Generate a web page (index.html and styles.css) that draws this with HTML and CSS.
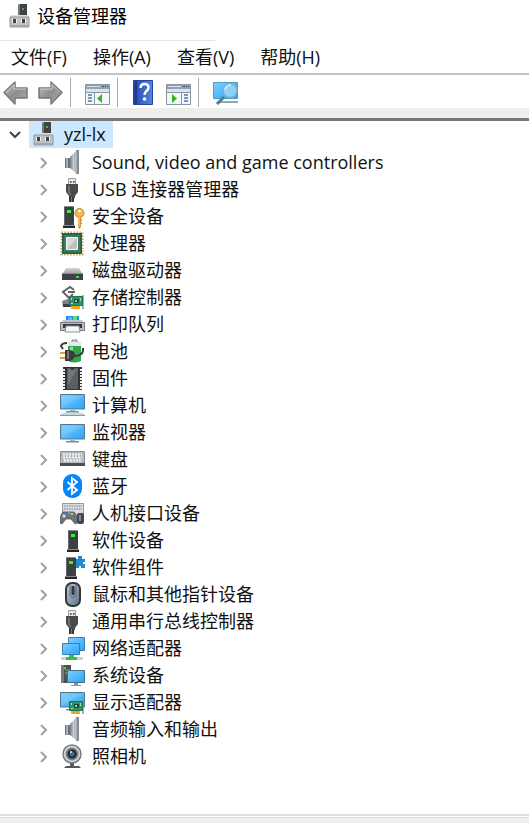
FILE: index.html
```html
<!DOCTYPE html>
<html lang="zh-CN">
<head>
<meta charset="utf-8">
<meta name="viewport" content="width=device-width, initial-scale=1">
<title>设备管理器</title>
<link rel="stylesheet" href="styles.css">
</head>
<body>
<svg class="defs" aria-hidden="true">
  <defs>
    <linearGradient id="screen" x1="0" y1="0" x2="1" y2="1"><stop offset="0" stop-color="#7cd0ff"/><stop offset="1" stop-color="#2aa4f8"/></linearGradient>
    <linearGradient id="metal" x1="0" y1="0" x2="0" y2="1"><stop offset="0" stop-color="#d4d6d8"/><stop offset="1" stop-color="#909498"/></linearGradient>
    <linearGradient id="cone" x1="0" y1="0" x2="1" y2="0"><stop offset="0" stop-color="#747b82"/><stop offset=".5" stop-color="#c6ccd1"/><stop offset="1" stop-color="#8b929a"/></linearGradient>
    <linearGradient id="arrow" x1="0" y1="0" x2="1" y2="1"><stop offset="0" stop-color="#c4c4c4"/><stop offset=".5" stop-color="#8e8e8e"/><stop offset="1" stop-color="#b0b0b0"/></linearGradient>
    <linearGradient id="book" x1="0" y1="0" x2="1" y2="0"><stop offset="0" stop-color="#24409c"/><stop offset=".25" stop-color="#3159bd"/><stop offset="1" stop-color="#5584da"/></linearGradient>
    <linearGradient id="mouse" x1="0" y1="0" x2="1" y2="1"><stop offset="0" stop-color="#c3cfdc"/><stop offset="1" stop-color="#5d7187"/></linearGradient>
    <symbol id="expand" viewBox="0 0 9 14"><path d="M2 2l5 5-5 5" fill="none" stroke="#a0a0a0" stroke-width="2"/></symbol>
    <symbol id="manager" viewBox="0 0 21 25">
      <path d="M9 1l2-1h7v13H9z" fill="#414244"/><path d="M9 1l2-1v13H9z" fill="#77797b"/><circle cx="14" cy="5" r="1" fill="#35df45"/>
      <path d="M2 11h17l1 3H1z" fill="#dedfe0"/><path d="M1 13h19v10H1z" fill="#c0c1c3" stroke="#98999c"/><path d="M1 21h19v2H1z" fill="#a6a7aa"/>
      <path d="M3 15h5v4H3zm9 0h5v4h-5z" fill="#f2f2f2"/><path d="M4 15h3v4H4zm9 0h3v4h-3z" fill="#414244"/>
    </symbol>
    <symbol id="speaker" viewBox="0 0 25 25">
      <path d="M5 8h5v10H5z" fill="#68747f"/><path d="M6 8h2v10H6z" fill="#a4b0b9"/><path d="M10 7l7-7v24l-7-6z" fill="url(#cone)"/><path d="M16 0h3v24h-3z" fill="#868e96"/><path d="M16 1v22" fill="none" stroke="#ccd2d8"/>
    </symbol>
    <symbol id="usb" viewBox="0 0 25 25">
      <path d="M8.500 1.500h7V8h-7z" fill="#ededed" stroke="#9a9a9a"/><path d="M10 4h1.500v2H10zm3 0h1.500v2H13z" fill="#555"/>
      <path d="M6 7h12v8l-3 4v2H9v-2l-3-4z" fill="#484b4d"/><path d="M8 9h2v6l1 3H9l-1-3z" fill="#6d7072"/><path d="M9 20h5v5H9z" fill="#393b3c"/><path d="M11 20h1v5h-1z" fill="#777"/>
    </symbol>
    <symbol id="box" viewBox="0 0 12 23">
      <path d="M1 0h9l1 1v19H1z" fill="#3d4042"/><path d="M1 0h9l1 1H1z" fill="#8a8c8e"/><path d="M1 1h1v18H1z" fill="#656769"/><path d="M0 20h12v2H0z" fill="#25282a"/><path d="M0 19h12v1H0z" fill="#898b8d"/><path d="M4 4h4v3H4z" fill="#30f52e"/>
    </symbol>
    <symbol id="monitor" viewBox="0 0 25 19">
      <path d="M.5.500h24v14.500H.5z" fill="url(#screen)" stroke="#55788e"/><path d="M2 2h21L2 13z" fill="#92d8ff" opacity=".35"/><path d="M10 15h5v2h-5z" fill="#a8bac7"/><path d="M6 17h13v1.500H6z" fill="#71909f"/>
    </symbol>
    <symbol id="card" viewBox="0 0 15 14">
      <path d="M14 0v14" stroke="#879199" stroke-width="1.500"/><path d="M.5 1.500h13v9H.5z" fill="#2d9465" stroke="#207650"/><path d="M5 4h5v4H5z" fill="#1b4e3d"/><path d="M6 5h2v2H6z" fill="#8bcaac"/><path d="M2 3h1v2H2zm9 0h1v3h-1zM2 8h2v1H2z" fill="#a4e3c4"/><path d="M2 11h9v3H2z" fill="#f8ac20"/><path d="M5 11v3m3-3v3" stroke="#d98610" stroke-width=".6"/>
    </symbol>
    <symbol id="console" viewBox="0 0 25 22">
      <path d="M.5.500h24v20H.5z" fill="#f5f6f7" stroke="#8995a0"/><path d="M1 1h23v4H1z" fill="#93a2b0"/><path d="M2 2h13v1H2z" fill="#d8e1e9"/><path d="M17 2h2v1h-2zm3 0h1v1h-1zm2 0h1v1h-1z" fill="#35516b"/><path d="M1 5h23v3H1z" fill="#dfe3e6"/><path d="M1 8h23v1H1z" fill="#8995a0"/>
    </symbol>
  </defs>
</svg>

<div class="window">
  <header class="titlebar">
    <svg class="manager-icon" aria-hidden="true"><use href="#manager"/></svg>
    <h1 class="title">设备管理器</h1>
  </header>

  <nav class="menubar">
    <button class="menu" type="button">文件(F)</button>
    <button class="menu" type="button">操作(A)</button>
    <button class="menu" type="button">查看(V)</button>
    <button class="menu" type="button">帮助(H)</button>
  </nav>

  <div class="toolbar" role="toolbar" aria-label="工具栏">
    <div class="group">
      <button class="tool" type="button" aria-label="后退"><svg width="25" height="25" viewBox="0 0 25 25"><path d="M1 12.500L12 2v6h12v10H12v6z" fill="url(#arrow)" stroke="#777" stroke-width="1.500" stroke-linejoin="round"/><path d="M3 12.500l8-8V9h12" fill="none" stroke="#cfcfcf"/></svg></button>
      <button class="tool" type="button" aria-label="前进"><svg width="25" height="25" viewBox="0 0 25 25"><path d="M24 12.500L13 2v6H1v10h12v6z" fill="url(#arrow)" stroke="#777" stroke-width="1.500" stroke-linejoin="round"/><path d="M2 9h12V4.500l8 8" fill="none" stroke="#cfcfcf"/></svg></button>
    </div>
    <div class="group">
      <button class="tool" type="button" aria-label="显示控制台树"><svg width="25" height="25" viewBox="0 -4 25 25"><use href="#console" width="25" height="22"/><path d="M9.500 9v11" stroke="#8995a0"/><path d="M3 11h4m-4 3h4m-4 3h4" stroke="#387fbd" stroke-width="1.500"/><path d="M17 10v9l-5-4.500z" fill="#3bb226"/></svg></button>
    </div>
    <div class="group">
      <button class="tool" type="button" aria-label="帮助"><svg width="20" height="25" viewBox="0 0 20 25"><path d="M.5.500h19v24H.5z" fill="url(#book)" stroke="#24439e"/><path d="M2 1h2v23H2z" fill="#213a8b"/><path d="M7.500 8q.2-4 4-4 4 0 4 3.500 0 2-2 3.500-2 1.500-2 4" fill="none" stroke="#fff" stroke-width="2.500"/><circle cx="11.500" cy="19" r="1.800" fill="#fff"/></svg></button>
      <button class="tool" type="button" aria-label="显示操作窗格"><svg width="25" height="25" viewBox="0 -4 25 25"><use href="#console" width="25" height="22"/><path d="M15.500 9v11" stroke="#8995a0"/><path d="M18 11h4m-4 3h4m-4 3h4" stroke="#387fbd" stroke-width="1.500"/><path d="M6 10v9l5-4.500z" fill="#3bb226"/></svg></button>
    </div>
    <div class="group">
      <button class="tool" type="button" aria-label="扫描检测硬件改动"><svg width="25" height="25" viewBox="0 0 25 25"><path d="M.5 2.500h24v16H.5z" fill="url(#screen)" stroke="#4f9dc9"/><path d="M4 21h21v2H4z" fill="#91a9b7"/><path d="M11 17L4 24" stroke="#537c94" stroke-width="3"/><circle cx="17" cy="10.500" r="7" fill="#8fd0fa" stroke="#7fb0cc" stroke-width="1.500"/><path d="M12 10q1-5 6-5" fill="none" stroke="#d1efff" stroke-width="1.500"/></svg></button>
    </div>
  </div>

  <main class="content">
    <ul class="tree" role="tree" aria-label="设备">
      <li role="treeitem" aria-expanded="true">
        <div class="root">
          <button class="toggle" type="button" aria-label="折叠"><svg width="14" height="9" viewBox="0 0 14 9"><path d="M2 2l5 5 5-5" fill="none" stroke="#444" stroke-width="2"/></svg></button>
          <span class="selected"><svg class="manager-icon" aria-hidden="true"><use href="#manager"/></svg>yzl-lx</span>
        </div>
        <ul class="devices" role="group">
          <li class="device" role="treeitem"><button class="toggle" type="button" aria-label="展开"><svg width="9" height="14"><use href="#expand"/></svg></button><svg class="icon" viewBox="0 0 25 25"><use href="#speaker"/></svg><span>Sound, video and game controllers</span></li>
          <li class="device" role="treeitem"><button class="toggle" type="button" aria-label="展开"><svg width="9" height="14"><use href="#expand"/></svg></button><svg class="icon" viewBox="0 0 25 25"><use href="#usb"/></svg><span>USB 连接器管理器</span></li>
          <li class="device" role="treeitem"><button class="toggle" type="button" aria-label="展开"><svg width="9" height="14"><use href="#expand"/></svg></button><svg class="icon" viewBox="0 0 25 25"><use href="#box" x="3" y="2" width="12" height="23"/><path d="M18 12h3v11l-1.500 2-1.500-2z" fill="#d69a2e"/><circle cx="19.500" cy="9" r="4.500" fill="#edba56" stroke="#c08424"/><circle cx="19.500" cy="7" r="1.300" fill="#fff"/><path d="M19 13v9" stroke="#ffdd88"/><path d="M21 16h1m-1 3h1" stroke="#d69a2e" stroke-width="2"/></svg><span>安全设备</span></li>
          <li class="device" role="treeitem"><button class="toggle" type="button" aria-label="展开"><svg width="9" height="14"><use href="#expand"/></svg></button><svg class="icon" viewBox="0 0 25 25"><path d="M1.500 1.500h21v22h-21z" fill="none" stroke="#caa24d" stroke-width="2" stroke-dasharray="1.500 1.500"/><path d="M2 2h20v21H2z" fill="#2b654d"/><path d="M4 4h16v17H4z" fill="#3b7d60"/><path d="M6.500 6.500h11v12h-11z" fill="#dadbd9" stroke="#f7f7f5"/><path d="M17 7v11H7z" fill="#bfc2c0"/></svg><span>处理器</span></li>
          <li class="device" role="treeitem"><button class="toggle" type="button" aria-label="展开"><svg width="9" height="14"><use href="#expand"/></svg></button><svg class="icon" viewBox="0 0 25 25"><path d="M6 10h13l4 7H2z" fill="url(#metal)"/><path d="M2 15h21v7H2z" fill="#3e4245"/><path d="M2 15h21v1H2z" fill="#8a8d90"/><path d="M16 18h3v2h-3z" fill="#31e92b"/></svg><span>磁盘驱动器</span></li>
          <li class="device" role="treeitem"><button class="toggle" type="button" aria-label="展开"><svg width="9" height="14"><use href="#expand"/></svg></button><svg class="icon" viewBox="0 0 25 25"><path d="M2 16l9-3v9H3z" fill="#7b8185"/><path d="M3 19h8v3H3z" fill="#3b4144"/><use href="#card" x="9" y="10" width="15" height="14"/><path d="M14 5l-4-3-7 5 6 6 4-4M8 7h7" fill="none" stroke="#626568" stroke-width="2"/></svg><span>存储控制器</span></li>
          <li class="device" role="treeitem"><button class="toggle" type="button" aria-label="展开"><svg width="9" height="14"><use href="#expand"/></svg></button><svg class="icon" viewBox="0 0 25 25"><path d="M6 4h13v6H6z" fill="#1d8eed"/><path d="M13 4h4v5h-4z" fill="#5ee46a"/><path d="M8 5h4v4H8z" fill="#83d4ff" opacity=".6"/><path d="M3 8h19l3 5H0z" fill="#c2c5c9"/><path d="M.5 10.500h24v8H.5z" fill="#babdc1" stroke="#777c82"/><path d="M3 12h19v4H3z" fill="#34383c"/><path d="M6 14h13l1 6H5z" fill="#f8f8f8" stroke="#8d9296"/></svg><span>打印队列</span></li>
          <li class="device" role="treeitem"><button class="toggle" type="button" aria-label="展开"><svg width="9" height="14"><use href="#expand"/></svg></button><svg class="icon" viewBox="0 0 25 25"><path d="M12 1h5v3h-5z" fill="#c1c9d2" stroke="#818c96"/><path d="M8 4q6-3 13 0v18q-7 3-13 0z" fill="#31a647"/><path d="M8 4q6-3 13 0v3H8z" fill="#e5e9ef"/><path d="M10 8h3v8h-3z" fill="#8be39a"/><path d="M0 14h7m-7 5h7" stroke="#d8a52e" stroke-width="2"/><path d="M5 11h5q5 1 5 5t-5 6H5z" fill="#393c3e"/><path d="M7 12h2v8H7z" fill="#73777a"/><path d="M14 17q8 0 9-5V9M3 10L1 7q1-3 6-3" fill="none" stroke="#393c3e" stroke-width="2"/></svg><span>电池</span></li>
          <li class="device" role="treeitem"><button class="toggle" type="button" aria-label="展开"><svg width="9" height="14"><use href="#expand"/></svg></button><svg class="icon" viewBox="0 0 25 25"><path d="M3 1h19v23H3z" fill="#303335"/><path d="M4 3v20M21 3v20" stroke="#f0f0f0" stroke-width="2" stroke-dasharray="2 1"/><path d="M7 2h3q2.500 3 5 0h3v21H7z" fill="#5c5f61"/><path d="M8 3h2q2.500 3 5 0h2L8 19z" fill="#747779"/></svg><span>固件</span></li>
          <li class="device" role="treeitem"><button class="toggle" type="button" aria-label="展开"><svg width="9" height="14"><use href="#expand"/></svg></button><svg class="icon" viewBox="0 0 25 25"><use href="#monitor" y="1" width="25" height="19"/><path d="M2 20h21l2 2H0z" fill="#c8d8e3"/><path d="M0 22h25v1H0z" fill="#8299a9"/></svg><span>计算机</span></li>
          <li class="device" role="treeitem"><button class="toggle" type="button" aria-label="展开"><svg width="9" height="14"><use href="#expand"/></svg></button><svg class="icon" viewBox="0 0 25 25"><use href="#monitor" y="4" width="25" height="19"/></svg><span>监视器</span></li>
          <li class="device" role="treeitem"><button class="toggle" type="button" aria-label="展开"><svg width="9" height="14"><use href="#expand"/></svg></button><svg class="icon" viewBox="0 0 25 25"><path d="M.5 4.500h24v14H.5z" fill="#b5bac0" stroke="#888e95"/><path d="M3 7.500h19M3 10.500h19M4 13.500h17" stroke="#f7f7f7" stroke-width="2" stroke-dasharray="2 1"/><path d="M0 16h25v3H0z" fill="#4d5052"/></svg><span>键盘</span></li>
          <li class="device" role="treeitem"><button class="toggle" type="button" aria-label="展开"><svg width="9" height="14"><use href="#expand"/></svg></button><svg class="icon" viewBox="0 0 25 25"><rect x="3" y="0" width="19" height="24" rx="9" fill="#0786fa"/><path d="M7.500 8l9.500 8-5 4V4l5 4-9.500 8" fill="none" stroke="#fff" stroke-width="1.800"/></svg><span>蓝牙</span></li>
          <li class="device" role="treeitem"><button class="toggle" type="button" aria-label="展开"><svg width="9" height="14"><use href="#expand"/></svg></button><svg class="icon" viewBox="0 0 25 25"><path d="M2.500 2.500h21v12h-21z" fill="#d8dce0" stroke="#929ba3"/><path d="M4 5h18M4 8h18" stroke="#8f9da9" stroke-width="1.500" stroke-dasharray="1.500 1"/><path d="M3 11h11q3 2 3 11l-2 1-4-5H6l-4 5-2-1q0-9 3-11z" fill="#68747f" stroke="#465058" stroke-width=".7"/><path d="M4 13v4m-2-2h4" stroke="#f1f3f4"/><circle cx="9" cy="12" r="1.500" fill="#35a7e9"/><circle cx="12" cy="13" r="1.300" fill="#f1b62a"/><circle cx="10" cy="15" r="1.200" fill="#de533c"/><rect x="17" y="12" width="7" height="11" rx="2" fill="#42484d"/><path d="M19 14h2v6h-2z" fill="#828d96"/></svg><span>人机接口设备</span></li>
          <li class="device" role="treeitem"><button class="toggle" type="button" aria-label="展开"><svg width="9" height="14"><use href="#expand"/></svg></button><svg class="icon" viewBox="0 0 25 25"><use href="#box" x="7" y="2" width="12" height="23"/></svg><span>软件设备</span></li>
          <li class="device" role="treeitem"><button class="toggle" type="button" aria-label="展开"><svg width="9" height="14"><use href="#expand"/></svg></button><svg class="icon" viewBox="0 0 25 25"><path d="M15 4h3V1h4v3h3v3h-2v2h2v4h-4v-2h-2v2h-4z" fill="#2589ce"/><use href="#box" x="5" y="2" width="12" height="23"/></svg><span>软件组件</span></li>
          <li class="device" role="treeitem"><button class="toggle" type="button" aria-label="展开"><svg width="9" height="14"><use href="#expand"/></svg></button><svg class="icon" viewBox="0 0 25 25"><rect x="6" y="1" width="14" height="23" rx="6" fill="url(#mouse)" stroke="#30373e" stroke-width="2"/><path d="M10 2v12q3 3 6 0V2" fill="none" stroke="#566576"/><rect x="11.500" y="4" width="3" height="9" rx="1" fill="#30373e"/></svg><span>鼠标和其他指针设备</span></li>
          <li class="device" role="treeitem"><button class="toggle" type="button" aria-label="展开"><svg width="9" height="14"><use href="#expand"/></svg></button><svg class="icon" viewBox="0 0 25 25"><use href="#usb"/></svg><span>通用串行总线控制器</span></li>
          <li class="device" role="treeitem"><button class="toggle" type="button" aria-label="展开"><svg width="9" height="14"><use href="#expand"/></svg></button><svg class="icon" viewBox="0 0 25 25"><path d="M8.500 1.500h16v13h-16z" fill="url(#screen)" stroke="#3c7fae"/><path d="M2.500 7.500h17v11h-17z" fill="url(#screen)" stroke="#3c7fae"/><path d="M1 21h22v3H1z" fill="#d0d3d4"/><path d="M9 19h5v2h3v3H6v-3h3z" fill="#39bd48"/></svg><span>网络适配器</span></li>
          <li class="device" role="treeitem"><button class="toggle" type="button" aria-label="展开"><svg width="9" height="14"><use href="#expand"/></svg></button><svg class="icon" viewBox="0 0 25 25"><path d="M1 2h10v18H1z" fill="#4b5053"/><path d="M1 2h3v18H1z" fill="#777b7d"/><path d="M5 7h5m-5 3h5" stroke="#9da1a4"/><path d="M4 4h2v2H4z" fill="#38e449"/><path d="M7.500 7.500h17v12h-17z" fill="url(#screen)" stroke="#44718c"/><path d="M14 20h4v2h-4zm-3 2h10v1H11z" fill="#8298a7"/></svg><span>系统设备</span></li>
          <li class="device" role="treeitem"><button class="toggle" type="button" aria-label="展开"><svg width="9" height="14"><use href="#expand"/></svg></button><svg class="icon" viewBox="0 0 25 25"><use href="#monitor" y="2" width="25" height="19"/><use href="#card" x="9" y="10" width="15" height="14"/></svg><span>显示适配器</span></li>
          <li class="device" role="treeitem"><button class="toggle" type="button" aria-label="展开"><svg width="9" height="14"><use href="#expand"/></svg></button><svg class="icon" viewBox="0 0 25 25"><use href="#speaker"/></svg><span>音频输入和输出</span></li>
          <li class="device" role="treeitem"><button class="toggle" type="button" aria-label="展开"><svg width="9" height="14"><use href="#expand"/></svg></button><svg class="icon" viewBox="0 0 25 25"><path d="M10 18h4v4h5l2 2H4l2-2h4z" fill="#55595c"/><circle cx="12" cy="10" r="9" fill="#d5d6d6" stroke="#777b7e" stroke-width="1.500"/><circle cx="12" cy="10" r="6.500" fill="#777d82"/><circle cx="12" cy="10" r="4.500" fill="#20282e"/><circle cx="12" cy="10" r="2.500" fill="#3e6f94"/><circle cx="11" cy="8" r="1" fill="#d9efff"/></svg><span>照相机</span></li>
        </ul>
      </li>
    </ul>
  </main>
  <footer class="statusbar"></footer>
</div>
</body>
</html>
```

FILE: styles.css
```css
* {
  box-sizing: border-box;
}

body {
  margin: 0;
  background: #fff;
  color: #111;
  font: 18px/27px "Open Sans", "Noto Sans CJK SC", sans-serif;
}

button {
  padding: 0;
  border: 0;
  background: none;
  color: inherit;
  font: inherit;
}

ul {
  margin: 0;
  padding: 0;
  list-style: none;
}

svg {
  display: block;
  flex: none;
}

.defs {
  position: absolute;
  width: 0;
  height: 0;
}

.window {
  display: flex;
  flex-direction: column;
  min-height: 100vh;
}

.titlebar {
  display: flex;
  align-items: center;
  align-self: flex-start;
  gap: 7px;
  width: 215px;
  height: 41px;
  padding: 0 9px 8px;
  border-bottom: 1px solid #e5e5e5;
}

.manager-icon {
  width: 21px;
  height: 25px;
}

.title {
  margin: 0;
  color: #000;
  font-size: 18px;
  font-weight: 400;
}

.menubar {
  display: flex;
  align-items: center;
  gap: 26px;
  height: 34px;
  padding: 0 11px;
  border-bottom: 2px solid #c3c3c5;
}

.toolbar {
  display: flex;
  align-items: center;
  height: 33px;
  padding: 2px 3px 0;
}

.group {
  display: flex;
  align-items: center;
  gap: 10px;
  height: 29px;
}

.group + .group {
  margin-left: 7px;
  padding-left: 14px;
  border-left: 1px solid #a8a8a8;
}

.group:nth-child(3) {
  padding-left: 15px;
  gap: 13px;
}

.content {
  flex: 1;
  border-top: 10px solid #eee;
}

.tree {
  border-top: 3px solid #777;
}

.root,
.device {
  display: flex;
  align-items: center;
  height: 27px;
  white-space: nowrap;
}

.root {
  gap: 7px;
  padding-left: 8px;
}

.toggle {
  display: flex;
  flex: none;
}

.selected {
  display: flex;
  align-items: center;
  gap: 10px;
  height: 27px;
  padding: 0 7px 0 4px;
  background: #cce8ff;
}

.devices {
  padding-top: 1px;
}

.device {
  padding-left: 39px;
}

.icon {
  width: 25px;
  height: 25px;
  margin: 0 7px 0 12px;
}

.statusbar {
  height: 9px;
  border-top: 2px solid #e0e0e0;
  background: linear-gradient(#fff 1px, #dcdcdc 1px, #dcdcdc 2px, #eee 2px);
}
```
